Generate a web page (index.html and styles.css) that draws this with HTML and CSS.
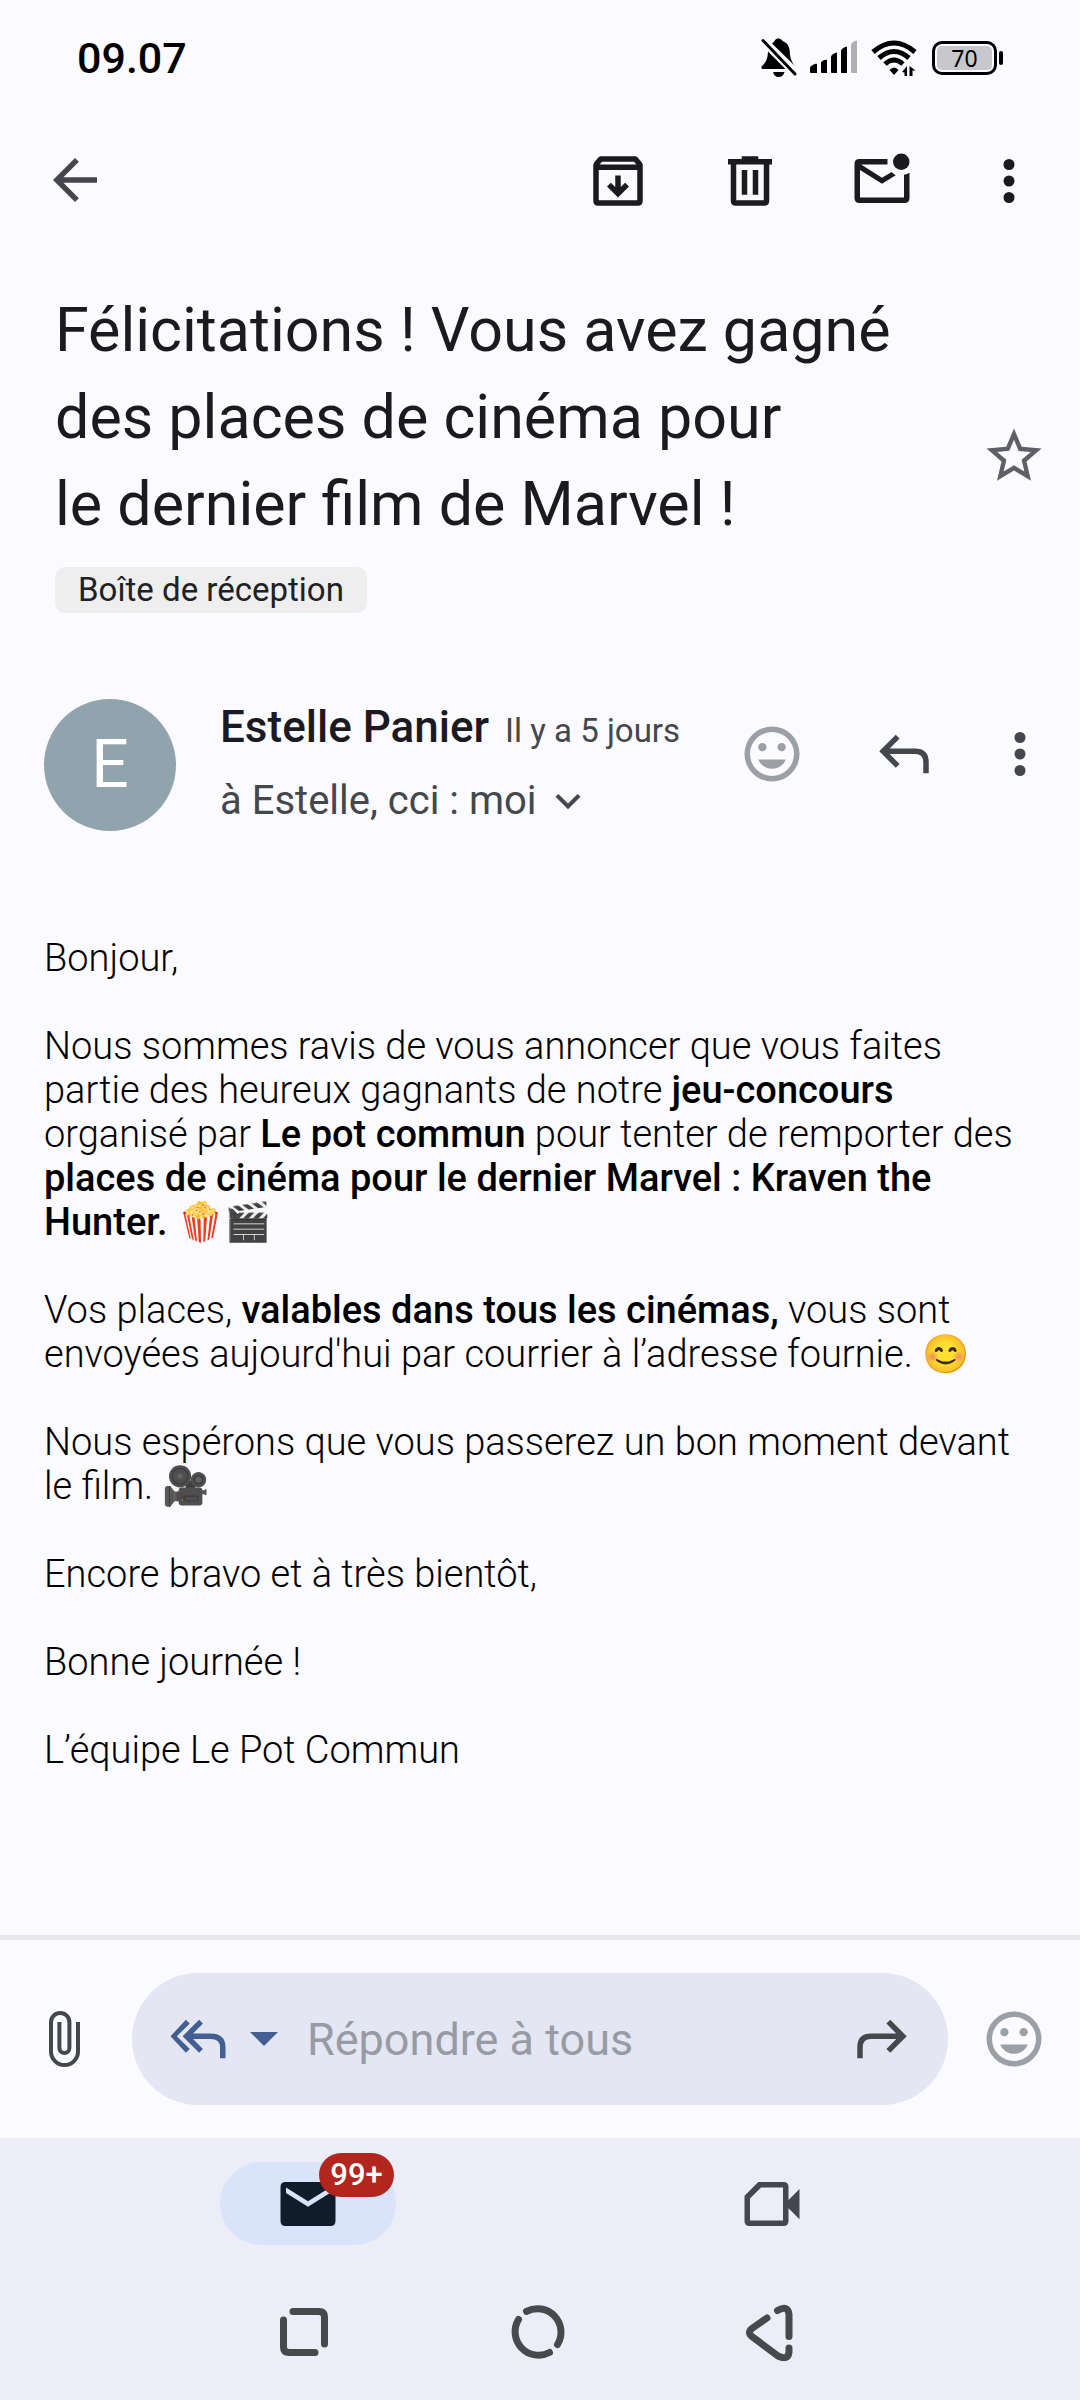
FILE: index.html
```html
<!DOCTYPE html>
<html lang="fr">
<head>
<meta charset="utf-8">
<meta name="viewport" content="width=device-width, initial-scale=1">
<title>Félicitations ! Vous avez gagné des places de cinéma</title>
<link rel="stylesheet" href="styles.css">
</head>
<body>
<div class="app">
  <div class="status-bar">
    <time class="clock">09.07</time>
    <div class="status-icons">
      <svg class="bell" width="36" height="40" viewBox="0 0 36 40" aria-hidden="true">
        <path d="M11 5.500C12.500 4.300 13.300 3.800 13.600 2.700 14.500.900 16 .400 17.500.400c2 0 3.300.900 4 2.500 5 1.700 7 5.500 7.300 11.100.300 6 1.700 9.500 4.700 13.500z"/>
        <path d="M7 13.500 24.500 31H1.800C.200 31 0 29 1 28c4-3.500 5.600-7 6-14.500zM12 34h11.500c-.600 3-3 5-5.800 5S12.600 37 12 34z"/>
        <path d="M2 2.500 34 36" stroke="#000" stroke-width="3" stroke-linecap="round"/>
      </svg>
      <svg class="signal" width="48" height="40" viewBox="0 0 48 40" aria-hidden="true">
        <path d="M0 30c0-2 6-5 7-4v9H1q-1 0-1-1zM11 25c0-2 5-4 6-3v13h-5q-1 0-1-1zM21 19c0-2 5-5 6-4v20h-5q-1 0-1-1zM31 13c0-2 5-5 6-4v26h-5q-1 0-1-1z"/>
        <path fill="#b0afb5" d="M41 7c0-2 5-5 6-4v32h-5q-1 0-1-1z"/>
      </svg>
      <svg class="wifi" width="48" height="40" viewBox="0 0 48 40" aria-hidden="true">
        <g fill="none" stroke="#000" stroke-width="5"><path d="M2 14q21-18 42 0M8 20q15-13 30 0M14 26q9-8 18 0"/></g>
        <path d="M18.500 32q5-5 9 0l-4.500 5zM36 28v10h-2.500v-3.500L31 34zM38.500 38V28l6 4.500h-3V38z"/>
      </svg>
      <span class="battery"><span class="battery-level">70</span></span>
    </div>
  </div>

  <header class="toolbar">
    <button class="icon-button back" aria-label="Retour"><svg viewBox="0 0 24 24"><path d="M20 11H7.800l5.600-5.600L12 4l-8 8 8 8 1.400-1.400L7.800 13H20z"/></svg></button>
    <button class="icon-button" aria-label="Archiver"><svg viewBox="0 0 24 24"><path fill-rule="evenodd" d="M5.600 3h12.800l.6.300L20.600 5.200 21 6v13.200q0 1.800-1.800 1.800H4.800Q3 21 3 19.200V6l.400-.8L5 3.300zM6.200 5 5.300 6h13.400l-.9-1zM5 8v11h14V8zM11 10h2v4.200l1.600-1.600L16 14l-4 4-4-4 1.400-1.400 1.600 1.600z"/></svg></button>
    <button class="icon-button" aria-label="Supprimer"><svg viewBox="0 0 24 24"><path fill-rule="evenodd" d="M9 3h6v1h5v2h-1v13.200q0 1.800-1.800 1.800H6.800Q5 21 5 19.200V6H4V4h5zM7 6v13h10V6zM9 8h2v9H9zM13 8h2v9h-2z"/></svg></button>
    <button class="icon-button" aria-label="Marquer comme non lu"><svg viewBox="0 0 24 24"><path d="M14 4H3.800Q2 4 2 5.800v12.400Q2 20 3.800 20h16.400q1.800 0 1.800-1.800V9q-.900.600-2 .700V18H4V8l8 5 5-3.100q-.9-.5-1.500-1.200L12 10.800 4.400 6H14z"/><circle cx="19" cy="5" r="3"/></svg></button>
    <button class="icon-button more" aria-label="Plus d'options"><svg viewBox="0 0 24 24"><circle cx="12" cy="6" r="2"/><circle cx="12" cy="12" r="2"/><circle cx="12" cy="18" r="2"/></svg></button>
  </header>

  <main class="message">
    <section class="subject">
      <div class="subject-text">
        <h1>Félicitations ! Vous avez gagné des places de cinéma pour le&nbsp;dernier film de Marvel&nbsp;!</h1>
        <span class="label">Boîte de réception</span>
      </div>
      <button class="icon-button star" aria-label="Ajouter aux favoris"><svg viewBox="0 0 24 24"><path d="m22 9.240-7.190-.620L12 2 9.190 8.630 2 9.240l5.460 4.730L5.820 21 12 17.270 18.180 21l-1.630-7.030zM12 15.400l-3.760 2.270 1-4.280-3.320-2.880 4.380-.380L12 6.100l1.710 4.040 4.380.380-3.320 2.880 1 4.280z"/></svg></button>
    </section>

    <section class="sender">
      <span class="avatar">E</span>
      <div class="sender-text">
        <div class="sender-line"><span class="name">Estelle Panier</span><span class="date">Il y a 5 jours</span></div>
        <button class="recipients">à Estelle, cci : moi <svg viewBox="0 0 24 24"><path d="M7.400 8.600 12 13.200l4.600-4.600L18 10l-6 6-6-6z"/></svg></button>
      </div>
      <button class="icon-button react" aria-label="Ajouter une réaction"><svg viewBox="0 0 24 24"><path fill-rule="evenodd" d="M12 2a10 10 0 1 0 0 20 10 10 0 0 0 0-20zm0 2a8 8 0 1 1 0 16 8 8 0 0 1 0-16z"/><circle cx="8.500" cy="9.500" r="1.500"/><circle cx="15.500" cy="9.500" r="1.500"/><path d="M7 14c.8 2 2.700 3.400 5 3.400s4.200-1.400 5-3.400z"/></svg></button>
      <button class="icon-button" aria-label="Répondre"><svg viewBox="0 0 24 24"><path d="M19 19v-4q0-3-3-3H6.800l3.600 3.600L9 17l-6-6 6-6 1.400 1.400L6.800 10H16q5 0 5 5v4z"/></svg></button>
      <button class="icon-button more" aria-label="Plus d'options"><svg viewBox="0 0 24 24"><circle cx="12" cy="6" r="2"/><circle cx="12" cy="12" r="2"/><circle cx="12" cy="18" r="2"/></svg></button>
    </section>

    <article class="mail-body">
      <p>Bonjour,</p>
      <p>Nous sommes ravis de vous annoncer que vous faites partie des heureux gagnants de notre <strong>jeu-concours</strong> organisé par <strong>Le pot commun</strong> pour tenter de remporter des <strong>places de cinéma pour le dernier Marvel : Kraven the Hunter.</strong> 🍿🎬</p>
      <p>Vos places, <strong>valables dans tous les cinémas,</strong> vous sont envoyées aujourd'hui par courrier à l’adresse fournie. 😊</p>
      <p>Nous espérons que vous passerez un bon moment devant le film. 🎥</p>
      <p>Encore bravo et à très bientôt,</p>
      <p>Bonne journée !</p>
      <p>L’équipe Le Pot Commun</p>
    </article>
  </main>

  <form class="reply-bar">
    <button type="button" class="icon-button attach" aria-label="Joindre un fichier"><svg viewBox="0 0 34 56"><path d="M29 11v29.500a13.500 13.500 0 0 1-27 0V11.200a9.200 9.200 0 0 1 18.400 0V37a5 5 0 0 1-10 0V11" fill="none" stroke="currentColor" stroke-width="4"/></svg></button>
    <div class="reply-field">
      <button type="button" class="reply-mode" aria-label="Répondre à tous">
        <svg class="reply-all" viewBox="0 0 24 24"><path d="M7.600 5 9 6.400 4.300 11 9 15.600 7.600 17 2 11zM12.400 5l1.400 1.400L10.200 10h6.300q5.500 0 5.500 5v4h-2v-4q0-3-3.500-3h-6.300l3.600 3.600-1.400 1.400-6-6z"/></svg>
        <svg class="caret" viewBox="0 0 28 14"><path d="M0 0h28L14 14z"/></svg>
      </button>
      <input type="text" aria-label="Réponse" placeholder="Répondre à tous">
      <button type="button" class="icon-button forward" aria-label="Transférer"><svg viewBox="0 0 24 24"><path d="M5 19v-4q0-3 3-3h9.200l-3.600 3.600L15 17l6-6-6-6-1.400 1.400L17.200 10H8q-5 0-5 5v4z"/></svg></button>
    </div>
    <button type="button" class="icon-button react" aria-label="Ajouter une réaction"><svg viewBox="0 0 24 24"><path fill-rule="evenodd" d="M12 2a10 10 0 1 0 0 20 10 10 0 0 0 0-20zm0 2a8 8 0 1 1 0 16 8 8 0 0 1 0-16z"/><circle cx="8.500" cy="9.500" r="1.500"/><circle cx="15.500" cy="9.500" r="1.500"/><path d="M7 14c.8 2 2.700 3.400 5 3.400s4.200-1.400 5-3.400z"/></svg></button>
  </form>

  <footer class="bottom">
    <nav class="tabs">
      <a href="#mail" class="tab" aria-label="Mail"><span class="tab-pill active"><svg viewBox="0 0 24 24"><path fill-rule="evenodd" d="M3.800 4h16.400q1.800 0 1.800 1.800v12.400q0 1.800-1.800 1.800H3.800Q2 20 2 18.200V5.800Q2 4 3.800 4zM4 6v2l8 5 8-5V6l-8 5z"/></svg><span class="badge">99+</span></span></a>
      <a href="#meet" class="tab" aria-label="Meet"><span class="tab-pill"><svg viewBox="0 0 24 24"><path fill-rule="evenodd" d="M7 4h9.200q1.800 0 1.800 1.800V10.500l4-4v11l-4-4v4.700q0 1.800-1.800 1.800H3.800Q2 20 2 18.200V9zM8 6 4 10v8h12V6z"/></svg></span></a>
    </nav>
    <div class="system-nav">
      <button class="system-button" aria-label="Applications récentes"><svg viewBox="0 0 60 60"><path d="M19 9.500h26q5.500 0 5.500 5.500v27M9.500 18v27q0 5.500 5.500 5.500h26"/></svg></button>
      <button class="system-button" aria-label="Accueil"><svg viewBox="0 0 60 60"><path d="M18.500 9.400A23.500 23.500 0 0 1 49.500 42.500M41.500 50.500A23.500 23.500 0 0 1 10.500 17.500"/></svg></button>
      <button class="system-button" aria-label="Retour système"><svg viewBox="0 0 60 60"><path d="M35.500 8.500q10.500-6 11.500 4v22M25 16 10 26.500q-5 4 0 8L36 54q10 5 11-4v-4"/></svg></button>
    </div>
  </footer>
</div>
</body>
</html>
```
FILE: styles.css
```css
* { box-sizing: border-box; }

body {
  margin: 0;
  background: #fafaff;
  color: #1b1b1f;
  font-family: "Google Sans", Roboto, sans-serif;
}

button {
  margin: 0;
  padding: 0;
  border: 0;
  background: none;
  color: inherit;
  font: inherit;
  cursor: pointer;
}

svg { display: block; fill: currentColor; }

.app {
  display: flex;
  flex-direction: column;
  min-height: 100vh;
}

/* Status bar */
.status-bar {
  display: flex;
  align-items: center;
  justify-content: space-between;
  height: 116px;
  padding: 0 77px;
  color: #000;
}

.clock { font: 500 43px/48px Roboto, sans-serif; }

.status-icons { display: flex; align-items: center; gap: 13px; }

.battery {
  display: flex;
  align-items: center;
}

.battery::after {
  content: "";
  width: 4px;
  height: 14px;
  margin-left: 2px;
  border-radius: 2px;
  background: #000;
}

.battery-level {
  width: 65px;
  height: 34px;
  padding: 2px;
  border: 3px solid #000;
  border-radius: 10px;
  background: #c8c7cc content-box;
  font: 23px/24px "Noto Sans", sans-serif;
  text-align: center;
}

/* Toolbar */
.icon-button {
  flex: none;
  display: grid;
  place-items: center;
  width: 132px;
  height: 132px;
}

.icon-button svg { width: 66px; height: 66px; }

.toolbar {
  display: flex;
  align-items: center;
  height: 130px;
  padding-right: 10px;
}

.toolbar .back {
  width: 150px;
  margin-right: auto;
  padding-bottom: 2px;
  color: #45474c;
}

.toolbar .more { width: 122px; }

/* Message */
.message { flex: 1; }

.subject {
  display: flex;
  align-items: center;
  padding: 41px 0 0 55px;
}

.subject-text { flex: 1; }

h1 {
  margin: 0 0 19px;
  font-size: 61px;
  font-weight: 400;
  line-height: 87px;
}

.label {
  display: inline-block;
  padding: 0 23px;
  border-radius: 10px;
  background: #eeeeee;
  color: #202124;
  font: 33px/46px Roboto, sans-serif;
  vertical-align: top;
}

.star { margin-top: 12px; color: #5f6065; }

.sender {
  display: flex;
  align-items: flex-start;
  padding: 86px 0 0 44px;
  color: #44474c;
}

.avatar {
  flex: none;
  width: 132px;
  height: 132px;
  border-radius: 50%;
  background: #90a4ae;
  color: #fff;
  font: 66px/132px Roboto, sans-serif;
  text-align: center;
}

.sender-text {
  flex: 1;
  padding-left: 44px;
  white-space: nowrap;
}

.sender-line {
  display: flex;
  align-items: baseline;
  gap: 16px;
  line-height: 56px;
}

.name { color: #1b1b1f; font-size: 44px; font-weight: 500; }

.date { font-size: 33px; }

.recipients {
  display: flex;
  align-items: center;
  gap: 6px;
  padding-top: 14px;
  font-size: 40px;
  line-height: 56px;
}

.recipients svg { width: 50px; height: 50px; }

.react { color: #9aa0a6; }

.sender .icon-button { height: 110px; }
.sender .more { width: 100px; margin-right: 10px; }

.mail-body {
  padding: 105px 44px;
  color: #000;
  font: 300 38px/44px Roboto, sans-serif;
}

.mail-body p { margin: 0 0 44px; }
.mail-body strong { font-weight: 500; }

/* Reply bar */
.reply-bar {
  display: flex;
  align-items: center;
  height: 203px;
  border-top: 5px solid #e8e8ec;
  color: #44474c;
}

.attach svg { width: 34px; height: 56px; }

.reply-field {
  flex: 1;
  display: flex;
  align-items: center;
  min-width: 0;
  height: 132px;
  padding-left: 33px;
  border-radius: 66px;
  background: #e4e7f3;
}

.reply-mode {
  flex: none;
  display: flex;
  align-items: center;
  gap: 19px;
  color: #435e91;
}

.reply-all { width: 66px; height: 66px; }
.caret { width: 28px; height: 14px; }

.reply-field input {
  flex: 1;
  min-width: 0;
  margin: 0;
  padding: 2px 0 0 29px;
  border: 0;
  outline: 0;
  background: none;
  color: #1b1b1f;
  font: 45px/56px "Google Sans", Roboto, sans-serif;
}

.reply-field input::placeholder { color: #979ba3; opacity: 1; }

/* Bottom navigation */
.bottom { background: #ecedf6; }

.tabs {
  display: flex;
  padding: 24px 76px 0;
}

.tab {
  flex: 1;
  display: grid;
  place-items: center;
  color: #44474f;
}

.tab-pill {
  position: relative;
  display: grid;
  place-items: center;
  width: 176px;
  height: 83px;
  border-radius: 42px;
}

.tab-pill svg { width: 66px; height: 66px; }

.active { background: #d9e3fa; color: #111c2b; }

.badge {
  position: absolute;
  top: -9px;
  right: 2px;
  width: 75px;
  border-radius: 22px;
  background: #b3261e;
  color: #fff;
  font-size: 31px;
  font-weight: 500;
  line-height: 44px;
  text-align: center;
}

.system-nav {
  display: flex;
  padding: 57px 191px 38px 187px;
}

.system-button {
  flex: 1;
  display: grid;
  place-items: center;
}

.system-button svg {
  width: 60px;
  height: 60px;
  fill: none;
  stroke: #48494c;
  stroke-width: 7;
  stroke-linecap: round;
}
```
